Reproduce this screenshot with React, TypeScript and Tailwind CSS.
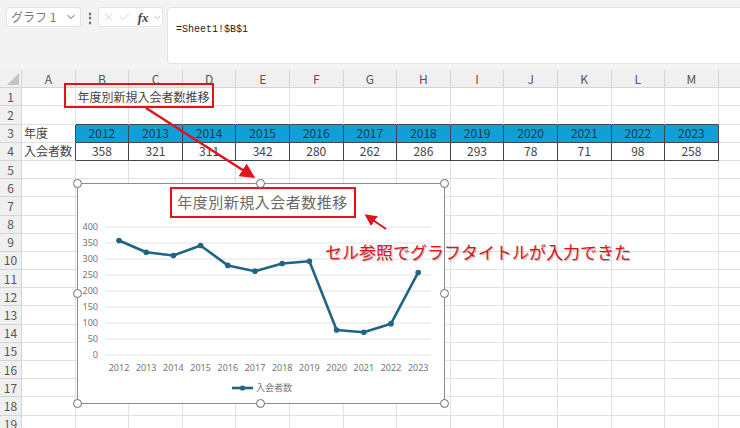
import { Check, ChevronDown, X } from 'lucide-react';

const cols = ['A', 'B', 'C', 'D', 'E', 'F', 'G', 'H', 'I', 'J', 'K', 'L', 'M'];
const years = [2012, 2013, 2014, 2015, 2016, 2017, 2018, 2019, 2020, 2021, 2022, 2023];
const members = [358, 321, 311, 342, 280, 262, 286, 293, 78, 71, 98, 258];
const rows = Array.from({ length: 19 }, (_, i) => i + 1);

const font = 'font-["Noto_Sans_CJK_JP","Noto_Sans",sans-serif]';

function cellClass(row: number, col: number) {
  const inTable = col >= 1 && (row === 3 || row === 4);
  let cls = 'border-r border-b border-[#e1e1e1] flex items-center text-[12px] leading-none';
  if (inTable) {
    cls = 'border-r border-b border-[#3b4a52] flex items-center justify-center text-[12px] leading-none';
    cls += row === 3 ? ' bg-[#10a0d6] text-[#1b3a4c]' : ' bg-white text-[#444]';
  } else if (row === 2 && col >= 1) {
    cls = 'border-r border-b border-[#e1e1e1] border-b-[#3b4a52] flex items-center text-[12px]';
  } else if (col === 0 && (row === 3 || row === 4)) {
    cls = 'border-r border-b border-[#e1e1e1] border-r-[#3b4a52] flex items-center text-[12px] leading-none text-[#444] pl-[2px]';
  }
  return cls;
}

function cellText(row: number, col: number) {
  if (row === 1 && col === 1) return '年度別新規入会者数推移';
  if (row === 3 && col === 0) return '年度';
  if (row === 4 && col === 0) return '入会者数';
  if (row === 3 && col >= 1) return String(years[col - 1]);
  if (row === 4 && col >= 1) return String(members[col - 1]);
  return '';
}

function Handle({ className }: { className: string }) {
  return <span className={`absolute h-[9px] w-[9px] rounded-full border-[1.5px] border-[#6b6b6b] bg-white ${className}`} />;
}

function Chart() {
  const px = (i: number) => 41 + i * 27.2;
  const py = (v: number) => 171 - v * 0.32;
  const points = members.map((v, i) => `${px(i)},${py(v)}`).join(' ');
  const ticks = [400, 350, 300, 250, 200, 150, 100, 50, 0];

  return (
    <div className="absolute left-[77px] top-[183px] h-[221px] w-[368px] border border-[#8c8c8c] bg-white">
      <svg className="absolute inset-0" width="366" height="219" viewBox="0 0 366 219">
        {ticks.map(t => (
          <g key={t}>
            <line x1="27" x2="353" y1={py(t)} y2={py(t)} stroke="#e3e3e3" strokeWidth="1" />
            <text x="20" y={py(t) + 3} textAnchor="end" fontSize="9" fill="#757575" fontFamily="Noto Sans, sans-serif">
              {t}
            </text>
          </g>
        ))}
        {years.map((y, i) => (
          <text key={y} x={px(i)} y="187" textAnchor="middle" fontSize="9" fill="#757575" fontFamily="Noto Sans, sans-serif">
            {y}
          </text>
        ))}
        <polyline points={points} fill="none" stroke="#1f6585" strokeWidth="2.6" strokeLinejoin="round" />
        {members.map((v, i) => (
          <circle key={i} cx={px(i)} cy={py(v)} r="2.8" fill="#1f6585" />
        ))}
        <line x1="154" x2="175" y1="204" y2="204" stroke="#1f6585" strokeWidth="2.6" />
        <circle cx="164.5" cy="204" r="2.6" fill="#1f6585" />
        <text x="178" y="207" fontSize="9" fill="#757575" fontFamily="Noto Sans CJK JP, sans-serif">
          入会者数
        </text>
      </svg>
      <div className="relative flex justify-center pl-[3px] pt-[3px]">
        <div className={`flex h-[31px] w-[186px] items-center justify-center border-2 border-[#e3121b] bg-white text-[15px] tracking-[0.5px] text-[#6a6a6a] ${font}`}>
          年度別新規入会者数推移
        </div>
      </div>
      <Handle className="-left-[5px] -top-[5px]" />
      <Handle className="left-[178px] -top-[5px]" />
      <Handle className="-right-[5px] -top-[5px]" />
      <Handle className="-left-[5px] top-[105px]" />
      <Handle className="-right-[5px] top-[105px]" />
      <Handle className="-bottom-[5px] -left-[5px]" />
      <Handle className="-bottom-[5px] left-[178px]" />
      <Handle className="-bottom-[5px] -right-[5px]" />
    </div>
  );
}

export default function App() {
  return (
    <div className={`relative h-[428px] w-[740px] overflow-hidden bg-white ${font}`}>
      <div className="flex h-[70px] items-start bg-[#f3f3f3] pl-[6px] pt-[7px]">
        <div className="flex h-[20px] w-[75px] items-center justify-between rounded-[3px] border border-[#e4e4e4] bg-white pl-[4px] pr-[3px]">
          <span className="text-[12px] leading-none text-[#777]">グラフ 1</span>
          <ChevronDown className="h-[12px] w-[12px] text-[#555]" strokeWidth={2} />
        </div>
        <div className="flex h-[20px] w-[17px] items-center justify-center text-[12px] font-bold text-[#555]">⋮</div>
        <div className="flex h-[20px] w-[65px] items-center gap-[3px] rounded-[3px] border border-[#e4e4e4] bg-white pl-[3px]">
          <X className="h-[14px] w-[14px] text-[#c4c4c4]" strokeWidth={1.3} />
          <Check className="h-[14px] w-[14px] text-[#c4c4c4]" strokeWidth={1.3} />
          <span className="ml-[3px] font-['Liberation_Serif',serif] text-[13px] font-bold italic leading-none text-[#444]">fx</span>
          <ChevronDown className="h-[11px] w-[11px] text-[#999]" strokeWidth={1.5} />
        </div>
        <div className="ml-[4px] h-[57px] flex-1 rounded-l-[4px] border border-r-0 border-[#e4e4e4] bg-white pl-[8px] pt-[5px]">
          <span className="font-['Liberation_Mono',monospace] text-[10px] text-[#222]">=Sheet1!$B$1</span>
        </div>
      </div>

      <div className="grid grid-cols-[22px_repeat(13,53.6px)_1fr] auto-rows-[18.2px]">
        <div className="relative h-[18px] border-b border-r border-[#d4d4d4] bg-[#f0f0f0]">
          <span className="absolute bottom-[2px] right-[2px] h-0 w-0 border-b-[12px] border-l-[12px] border-b-[#c4c4c4] border-l-transparent" />
        </div>
        {cols.map(c => (
          <div key={c} className="flex h-[18px] items-center justify-center border-b border-r border-[#d4d4d4] bg-[#f0f0f0] text-[12px] text-[#555]">
            {c}
          </div>
        ))}
        <div className="h-[18px] border-b border-[#d4d4d4] bg-[#f0f0f0]" />

        {rows.map(r => (
          <div key={r} className="contents">
            <div className="flex items-center justify-center border-b border-r border-[#d4d4d4] bg-[#f0f0f0] text-[12px] leading-none text-[#555]">
              {r}
            </div>
            {cols.map((c, ci) => (
              <div key={c} className={`${cellClass(r, ci)} ${r === 1 && ci === 1 ? 'overflow-visible whitespace-nowrap pl-[2px] text-[#444]' : ''}`}>
                {cellText(r, ci)}
              </div>
            ))}
            <div className="border-b border-[#e1e1e1]" />
          </div>
        ))}
      </div>

      <div className="absolute left-[64px] top-[83px] h-[25px] w-[150px] border-2 border-[#e3121b]" />

      <Chart />

      <svg className="pointer-events-none absolute inset-0" width="740" height="428" viewBox="0 0 740 428">
        <defs>
          <marker id="head" markerWidth="6" markerHeight="6" refX="4.5" refY="3" orient="auto" markerUnits="strokeWidth">
            <path d="M0,0 L6,3 L0,6 Z" fill="#e3121b" />
          </marker>
        </defs>
        <line x1="146" y1="108" x2="252" y2="176" stroke="#e3121b" strokeWidth="2.5" markerEnd="url(#head)" />
        <line x1="386" y1="229" x2="367" y2="216" stroke="#e3121b" strokeWidth="2" markerEnd="url(#head)" />
      </svg>

      <div className="absolute left-[325px] top-[243px] whitespace-nowrap text-[17px] leading-none text-[#e3121b] [text-shadow:1px_1px_1px_rgba(0,0,0,0.28)]">
        セル参照でグラフタイトルが入力できた
      </div>
    </div>
  );
}
